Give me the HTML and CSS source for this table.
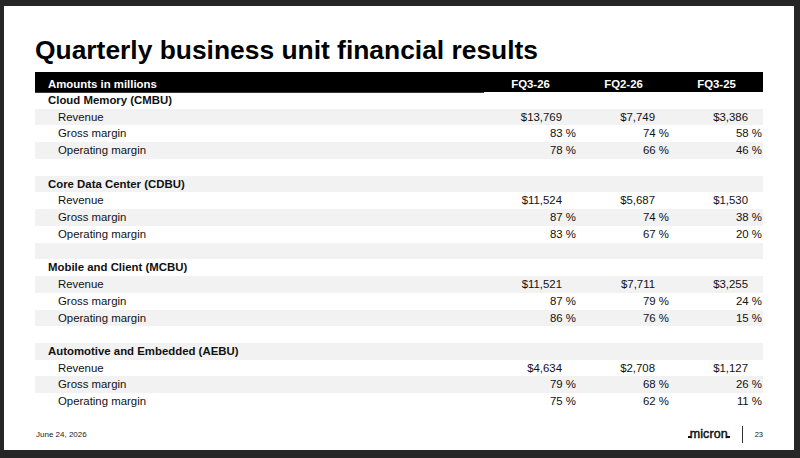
FILE: index.html
```html
<!DOCTYPE html>
<html lang="en">
<head>
<meta charset="utf-8">
<title>Quarterly business unit financial results</title>
<link rel="stylesheet" href="styles.css">
</head>
<body>
<div class="slide">
  <h1 class="title">Quarterly business unit financial results</h1>
  <div class="table">
    <div class="thead">
      <div class="th th-label">Amounts in millions</div>
      <div class="th">FQ3-26</div>
      <div class="th">FQ2-26</div>
      <div class="th">FQ3-25</div>
    </div>
    <div class="tbody">
      <div class="row cat"><div class="lab">Cloud Memory (CMBU)</div><div></div><div></div><div></div></div>
      <div class="row"><div class="lab sub">Revenue</div><div class="cur">$13,769</div><div class="cur">$7,749</div><div class="cur">$3,386</div></div>
      <div class="row"><div class="lab sub">Gross margin</div><div class="pct">83 %</div><div class="pct">74 %</div><div class="pct">58 %</div></div>
      <div class="row"><div class="lab sub">Operating margin</div><div class="pct">78 %</div><div class="pct">66 %</div><div class="pct">46 %</div></div>
      <div class="row blank"><div></div><div></div><div></div><div></div></div>
      <div class="row cat"><div class="lab">Core Data Center (CDBU)</div><div></div><div></div><div></div></div>
      <div class="row"><div class="lab sub">Revenue</div><div class="cur">$11,524</div><div class="cur">$5,687</div><div class="cur">$1,530</div></div>
      <div class="row"><div class="lab sub">Gross margin</div><div class="pct">87 %</div><div class="pct">74 %</div><div class="pct">38 %</div></div>
      <div class="row"><div class="lab sub">Operating margin</div><div class="pct">83 %</div><div class="pct">67 %</div><div class="pct">20 %</div></div>
      <div class="row blank"><div></div><div></div><div></div><div></div></div>
      <div class="row cat"><div class="lab">Mobile and Client (MCBU)</div><div></div><div></div><div></div></div>
      <div class="row"><div class="lab sub">Revenue</div><div class="cur">$11,521</div><div class="cur">$7,711</div><div class="cur">$3,255</div></div>
      <div class="row"><div class="lab sub">Gross margin</div><div class="pct">87 %</div><div class="pct">79 %</div><div class="pct">24 %</div></div>
      <div class="row"><div class="lab sub">Operating margin</div><div class="pct">86 %</div><div class="pct">76 %</div><div class="pct">15 %</div></div>
      <div class="row blank"><div></div><div></div><div></div><div></div></div>
      <div class="row cat"><div class="lab">Automotive and Embedded (AEBU)</div><div></div><div></div><div></div></div>
      <div class="row"><div class="lab sub">Revenue</div><div class="cur">$4,634</div><div class="cur">$2,708</div><div class="cur">$1,127</div></div>
      <div class="row"><div class="lab sub">Gross margin</div><div class="pct">79 %</div><div class="pct">68 %</div><div class="pct">26 %</div></div>
      <div class="row"><div class="lab sub">Operating margin</div><div class="pct">75 %</div><div class="pct">62 %</div><div class="pct">11 %</div></div>
    </div>
  </div>
  <div class="footer">
    <div class="date">June 24, 2026</div>
    <div class="brand">
      <span class="logo"><span class="tail tail-l"></span>micron<span class="tail tail-r"></span></span>
      <span class="sep"></span>
      <span class="page">23</span>
    </div>
  </div>
</div>
</body>
</html>
```
FILE: styles.css
```css
html, body {
  margin: 0;
  padding: 0;
}
body {
  background: #262626;
  width: 800px;
  height: 458px;
  overflow: hidden;
  font-family: "Liberation Sans", Arial, sans-serif;
  color: #000;
}
.slide {
  margin: 6px 0 0 4px;
  width: 790px;
  height: 444px;
  background: #fff;
  box-sizing: border-box;
  padding: 29px 31px 6px 31px;
  display: flex;
  flex-direction: column;
}
.title {
  margin: 0;
  font-size: 26.4px;
  line-height: 30px;
  font-weight: 700;
}
.table {
  margin-top: 7px;
  width: 728px;
  font-size: 11.4px;
  color: #111;
}
.thead {
  display: grid;
  grid-template-columns: 449px 93px 93px 93px;
  height: 20px;
  background: #000;
  color: #fff;
  font-weight: 700;
  font-size: 11.4px;
}
.th {
  line-height: 14px;
  padding-top: 5px;
  text-align: center;
}
.th-label {
  text-align: left;
  padding-left: 13px;
  box-sizing: border-box;
  border-bottom: 1px solid #3a3a3a;
  height: 21px;
}
.row {
  display: grid;
  grid-template-columns: 449px 93px 93px 93px;
  height: 16.74px;
  line-height: 16.74px;
  white-space: nowrap;
}
.row:nth-child(even) {
  background: #f2f2f2;
}
.lab {
  padding-left: 13px;
}
.cat .lab {
  font-weight: 700;
}
.lab.sub {
  padding-left: 23px;
}
.cur {
  text-align: right;
  padding-right: 15px;
}
.pct {
  text-align: right;
  padding-right: 1px;
}
.footer {
  margin-top: auto;
  height: 20px;
  display: flex;
  align-items: center;
  justify-content: space-between;
}
.date {
  font-size: 8px;
  color: #222;
  padding-left: 1px;
}
.brand {
  display: flex;
  align-items: center;
}
.logo {
  font-family: "Liberation Sans", Arial, sans-serif;
  font-weight: 400;
  font-size: 12.5px;
  letter-spacing: 0.1px;
  color: #111;
  line-height: 14px;
  -webkit-text-stroke: 0.45px #111;
}
.tail {
  display: inline-block;
  width: 3.5px;
  height: 1.6px;
  background: #111;
  vertical-align: baseline;
}
.tail-l {
  margin-right: -1.4px;
}
.tail-r {
  margin-left: -1.6px;
}
.sep {
  width: 1px;
  height: 17px;
  background: #333;
  margin-left: 12px;
  margin-right: 12px;
}
.page {
  font-size: 7.5px;
  color: #111;
}
```
